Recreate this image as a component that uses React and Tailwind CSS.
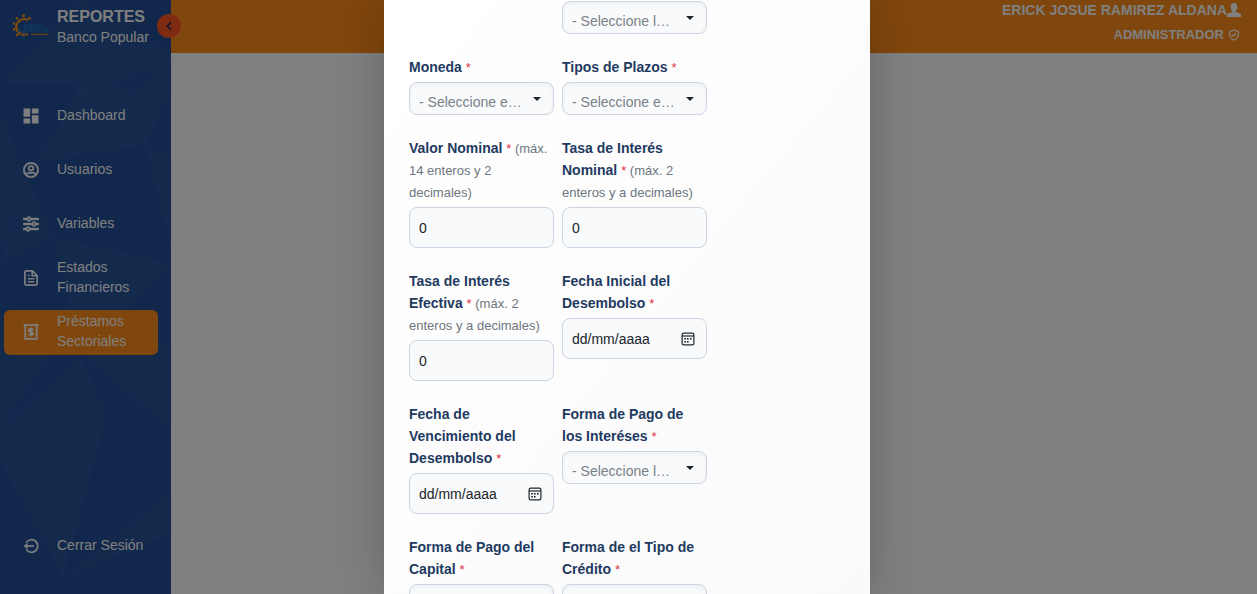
import { MdDashboard } from "react-icons/md";
import { FaRegUserCircle } from "react-icons/fa";
import { FaSliders } from "react-icons/fa6";
import { BiCheckShield } from "react-icons/bi";
import { ChevronLeft } from "lucide-react";

function UserIcon({ className }) {
  return <FaRegUserCircle className={className} stroke="currentColor" strokeWidth={14} />;
}

function SlidersIcon({ className }) {
  return <FaSliders className={className} stroke="currentColor" strokeWidth={10} />;
}

function PersonIcon({ className }) {
  return (
    <svg viewBox="0 0 14 14" className={className} fill="currentColor" aria-hidden="true">
      <path d="M7 0C9.1 0 10.4 1.6 10.4 3.9C10.4 5.7 9.6 7.3 8.6 8V9.1L12.6 10.2C13.5 10.5 14 11.1 14 12V14H0V12C0 11.1 0.5 10.5 1.4 10.2L5.4 9.1V8C4.4 7.3 3.6 5.7 3.6 3.9C3.6 1.6 4.9 0 7 0Z" />
    </svg>
  );
}

function FileIcon({ className }) {
  return (
    <svg viewBox="0 0 16 16" className={className} fill="none" stroke="currentColor" aria-hidden="true">
      <path d="M9.5 0.9H3.2C2.4 0.9 1.9 1.5 1.9 2.2V13.8C1.9 14.5 2.4 15.1 3.2 15.1H12.8C13.6 15.1 14.1 14.5 14.1 13.8V5.5Z" strokeWidth="1.7" strokeLinejoin="round" />
      <path d="M9.2 1V5.8H14" strokeWidth="1.5" />
      <path d="M4.8 5.6H6.6M4.8 8.7H11.4M4.8 11.8H11.4" strokeWidth="1.5" />
    </svg>
  );
}

function ReceiptIcon({ className }) {
  return (
    <svg viewBox="0 0 16 16" className={className} fill="none" stroke="currentColor" aria-hidden="true">
      <path d="M0.5 1H15.5" strokeWidth="1.8" />
      <path d="M2.3 1.5V14.9H13.7V1.5" strokeWidth="1.8" />
      <path d="M10.4 5.9C9.9 5.2 9 4.9 8 4.9C6.7 4.9 5.8 5.4 5.8 6.4C5.8 8.5 10.3 7.4 10.3 9.6C10.3 10.6 9.3 11.1 8 11.1C6.9 11.1 6 10.8 5.5 10.1M8 3.6V12.4" strokeWidth="1.8" />
    </svg>
  );
}

function LogoutIcon({ className }) {
  return (
    <svg viewBox="0 0 16 16" className={className} fill="none" stroke="currentColor" aria-hidden="true">
      <path d="M3.2 4.6A6.3 6.3 0 1 1 3.2 11.4" strokeWidth="1.7" />
      <path d="M3 8H11" strokeWidth="1.7" />
      <path d="M4.6 5V11L0.4 8Z" fill="currentColor" stroke="none" />
    </svg>
  );
}

function BankLogo() {
  return (
    <svg viewBox="0 0 38 26" className="h-[26px] w-[38px] shrink-0" role="img" aria-label="Banco Popular">
      <path d="M16 6.2A8 8 0 0 0 4.4 15" fill="none" stroke="#f7941d" strokeWidth="2.4" />
      <path d="M4.4 14.5A8 8 0 0 0 16 20" fill="none" stroke="#f7941d" strokeWidth="2.4" strokeDasharray="3.4 0.7" />
      <path d="M7 15A5.5 5.5 0 0 0 15 17.5" fill="none" stroke="#1b75bc" strokeWidth="1.6" />
      <g fill="#f7941d">
        <circle cx="11.5" cy="1.8" r="1.6" />
        <circle cx="5" cy="4.5" r="1.4" />
        <circle cx="2" cy="9.5" r="1.3" />
        <circle cx="2" cy="15.5" r="1.3" />
        <circle cx="5" cy="21" r="1.4" />
        <circle cx="17.5" cy="4.2" r="1.5" />
      </g>
      <circle cx="11.5" cy="23.8" r="1.4" fill="#1b75bc" />
      <g fill="#1b7cc4" fontFamily="Liberation Sans, sans-serif" fontWeight="700" fontSize="5.2">
        <text x="11.5" y="13.6">BANCO</text>
        <text x="11.5" y="18.2">POPULAR</text>
      </g>
      <path d="M19 20.3H36" stroke="#f7941d" strokeWidth="1" />
    </svg>
  );
}

const NAV = [
  { lines: ["Dashboard"], Icon: MdDashboard, size: "size-5" },
  { lines: ["Usuarios"], Icon: UserIcon, size: "size-4" },
  { lines: ["Variables"], Icon: SlidersIcon, size: "size-4" },
  { lines: ["Estados", "Financieros"], Icon: FileIcon, size: "size-4" },
  { lines: ["Préstamos", "Sectoriales"], Icon: ReceiptIcon, size: "size-4", active: true },
];

function NavItem({ lines, Icon, size, active }) {
  return (
    <a
      href="#"
      aria-current={active ? "page" : undefined}
      className={`flex h-[45px] items-center rounded-md pb-1 text-sm leading-5 text-white ${active ? "bg-[#ff8d1a]" : ""}`}
    >
      <span className="flex w-[53px] shrink-0 justify-center pt-0.5">
        <Icon className={size} />
      </span>
      <span>
        {lines.map((line) => (
          <span key={line} className="block">{line}</span>
        ))}
      </span>
    </a>
  );
}

function SidebarFacets() {
  return (
    <svg viewBox="0 0 171 594" preserveAspectRatio="none" className="absolute inset-0 size-full" aria-hidden="true">
      <g fill="#ffffff" fillOpacity="0.022">
        <path d="M81 0V83H0Z" />
        <path d="M81 0L171 53L81 83Z" />
        <path d="M81 83L171 53V62L72 100Z" />
        <path d="M81 90L138 90L36 162Z" />
        <path d="M36 162L145 146L171 90V53L138 90Z" />
        <path d="M145 146L171 154V250Z" />
        <path d="M0 110L28 180L0 250Z" />
        <path d="M28 180L54 237L0 265Z" />
        <path d="M54 237L171 263L125 312H70Z" />
        <path d="M0 430L81 355L107 416L63 578L0 460Z" />
        <path d="M63 578L171 492V534Z" />
        <path d="M81 355L171 340V430Z" />
        <path d="M0 312H81L0 430Z" />
      </g>
    </svg>
  );
}

function Sidebar() {
  return (
    <aside className="relative flex w-[171px] shrink-0 flex-col bg-[#225098]">
      <SidebarFacets />
      <div className="relative flex h-[53px] items-center pl-3">
        <BankLogo />
        <div className="pl-[7px] text-white">
          <p className="text-base leading-5 font-bold">REPORTES</p>
          <p className="text-sm leading-5">Banco Popular</p>
        </div>
        <button
          type="button"
          aria-label="Contraer menú"
          className="absolute top-3.5 -right-2.5 z-10 flex size-6 items-center justify-center rounded-full bg-[#ff5722] text-[#1d2b50]"
        >
          <ChevronLeft className="size-3.5" strokeWidth={3} />
        </button>
      </div>
      <nav className="relative flex flex-1 flex-col gap-[9px] pt-[41px] pr-[13px] pl-1">
        {NAV.map((item) => (
          <NavItem key={item.lines[0]} {...item} />
        ))}
      </nav>
      <div className="relative pr-[13px] pb-[25px] pl-1">
        <NavItem lines={["Cerrar Sesión"]} Icon={LogoutIcon} size="size-4" />
      </div>
    </aside>
  );
}

function Header() {
  return (
    <header className="flex h-[53px] flex-col items-end gap-[5px] bg-[#ff8d1a] pr-4 font-bold text-white">
      <p className="flex items-center text-sm leading-5">
        ERICK JOSUE RAMIREZ ALDANA
        <PersonIcon className="size-3.5" />
      </p>
      <p className="flex items-center gap-[3px] text-[13px] leading-5">
        ADMINISTRADOR
        <BiCheckShield className="size-3.5" />
      </p>
    </header>
  );
}

const CONTROL = "block w-full rounded-lg border border-[#cbd5e1] bg-[#f8fafc] px-[9px] text-sm outline-none";

function Control({ id, kind, text, name }) {
  if (kind === "select") {
    return (
      <div className="relative">
        <select
          id={id}
          aria-label={name}
          className={`${CONTROL} h-[33px] appearance-none pt-[7px] pr-7 text-[#7b8088] shadow-[inset_0_2px_4px_rgba(0,0,0,0.05)]`}
        >
          <option>{text}</option>
        </select>
        <svg viewBox="0 0 8 4" className="pointer-events-none absolute top-[15px] right-[13px] h-1 w-2" fill="#212529" aria-hidden="true">
          <path d="M0 0H8L4 4Z" />
        </svg>
      </div>
    );
  }
  if (kind === "date") {
    return (
      <div className="relative">
        <input id={id} type="text" placeholder="dd/mm/aaaa" className={`${CONTROL} h-[41px] pr-9 text-[#212529] placeholder:text-[#212529]`} />
        <button type="button" aria-label="Abrir calendario" className="absolute top-3.5 right-3">
          <svg viewBox="0 0 14 14" className="size-3.5" aria-hidden="true">
            <rect x="1.1" y="1.1" width="11.8" height="11.8" rx="1.6" fill="none" stroke="#212529" strokeWidth="1.2" />
            <path d="M1 4H13" stroke="#212529" strokeWidth="1.2" />
            <g fill="#212529">
              <rect x="6" y="6" width="1.6" height="1.6" />
              <rect x="9" y="6" width="1.6" height="1.6" />
              <rect x="3.3" y="6" width="1.6" height="1.6" />
              <rect x="3.3" y="9" width="1.6" height="1.6" />
              <rect x="6" y="9" width="1.6" height="1.6" />
            </g>
          </svg>
        </button>
      </div>
    );
  }
  return <input id={id} type="number" defaultValue="0" className={`${CONTROL} h-[41px] text-[#212529]`} />;
}

const FIELDS = [
  { id: "linea", name: "Línea", kind: "select", text: "- Seleccione l…", column: "col-start-2" },
  { id: "moneda", label: "Moneda", kind: "select", text: "- Seleccione e…" },
  { id: "plazos", label: "Tipos de Plazos", kind: "select", text: "- Seleccione e…" },
  { id: "valor", label: "Valor Nominal", hint: "(máx. 14 enteros y 2 decimales)", kind: "number" },
  { id: "tasa-nominal", label: "Tasa de Interés Nominal", hint: "(máx. 2 enteros y a decimales)", kind: "number" },
  { id: "tasa-efectiva", label: "Tasa de Interés Efectiva", hint: "(máx. 2 enteros y a decimales)", kind: "number" },
  { id: "fecha-inicial", label: "Fecha Inicial del Desembolso", kind: "date" },
  { id: "fecha-vencimiento", label: "Fecha de Vencimiento del Desembolso", kind: "date" },
  { id: "pago-intereses", label: "Forma de Pago de los Interéses", kind: "select", text: "- Seleccione l…" },
  { id: "pago-capital", label: "Forma de Pago del Capital", kind: "select", text: "- Seleccione l…" },
  { id: "tipo-credito", label: "Forma de el Tipo de Crédito", kind: "select", text: "- Seleccione e…" },
];

function Field({ id, label, hint, column, ...control }) {
  return (
    <div className={column}>
      {label && (
        <label htmlFor={id} className="mb-1 block text-sm leading-[22px] font-bold text-[#1f3a60]">
          {label} <span className="text-[13px] leading-none font-normal text-[#dc3545]">*</span>
          {hint && <span className="text-[13px] leading-none font-normal text-[#6c757d]"> {hint}</span>}
        </label>
      )}
      <Control id={id} {...control} />
    </div>
  );
}

export default function App() {
  return (
    <div className="relative flex h-screen overflow-hidden bg-white font-['Liberation_Sans',Arial,sans-serif]">
      <Sidebar />
      <main className="min-w-0 flex-1">
        <Header />
      </main>
      <div className="absolute inset-0 z-20 flex justify-center overflow-hidden bg-black/50 pr-[3px]">
        <div role="dialog" aria-label="Préstamos Sectoriales" className="h-full w-[486px] overflow-hidden bg-linear-to-br from-white to-[#fafafa] px-[25px] pt-px shadow-[0_0_40px_rgba(0,0,0,0.2)]">
          <form className="grid grid-cols-[145px_145px] items-start gap-x-2 gap-y-[22px]">
            {FIELDS.map((field) => (
              <Field key={field.id} {...field} />
            ))}
          </form>
        </div>
      </div>
    </div>
  );
}
